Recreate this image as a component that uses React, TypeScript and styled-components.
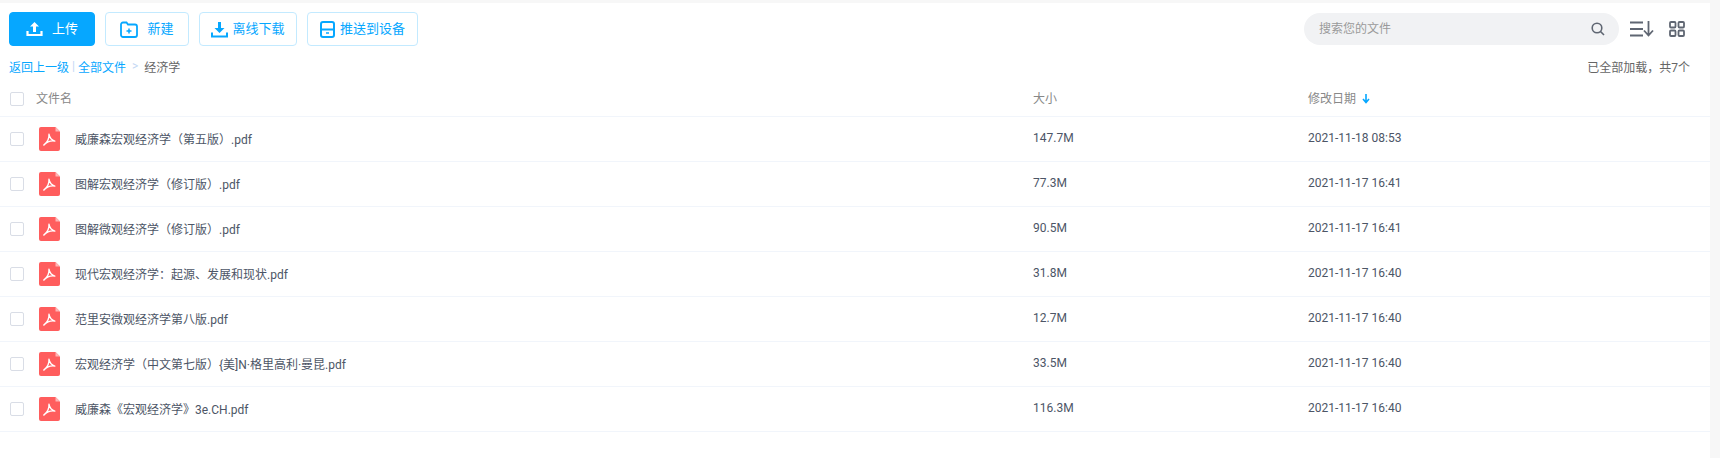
import styled, {createGlobalStyle} from "styled-components";

const GlobalStyle = createGlobalStyle`
	html, body {
		margin: 0;
		padding: 0;
		background: #f7f7f7;
		font-family: Roboto, "Noto Sans CJK SC", "Liberation Sans", sans-serif;
		font-size: 12px;
	}
`;
const Page = styled.div`
	width: 1710px;
	height: 455px;
	margin-top: 3px;
	background: #fff;
	overflow: hidden;
`;
const Toolbar = styled.div`
	display: flex;
	align-items: center;
	justify-content: space-between;
	height: 34px;
	padding: 9px 25px 0 9px;
`;
const Actions = styled.div`
	display: flex;
	gap: 10px;
`;
const Button = styled.button<{$primary?: boolean; $w: number; $gap: number}>`
	display: flex;
	align-items: center;
	justify-content: center;
	gap: ${p => p.$gap}px;
	width: ${p => p.$w}px;
	height: 34px;
	padding: 0;
	border-radius: 4px;
	border: 1px solid ${p => (p.$primary ? "#06a7ff" : "#c3eaff")};
	background: ${p => (p.$primary ? "#06a7ff" : "#fff")};
	color: ${p => (p.$primary ? "#fff" : "#06a7ff")};
	font-family: inherit;
	font-size: 13px;
`;
const Label = styled.span<{$lift: number}>`
	display: block;
	padding-bottom: ${p => p.$lift}px;
`;
const Tools = styled.div`
	display: flex;
	align-items: center;
`;
const Search = styled.div`
	display: flex;
	align-items: center;
	justify-content: space-between;
	width: 315px;
	height: 32px;
	box-sizing: border-box;
	padding: 0 14px 0 15px;
	margin-right: 11px;
	border-radius: 16px;
	background: #f1f2f4;
	color: #9a9a9a;
	font-size: 12px;
`;
const ToolIcon = styled.svg`
	display: block;
	flex: none;
`;
const GridIcon = styled(ToolIcon)`
	margin-left: 15px;
`;
const PathBar = styled.div`
	display: flex;
	align-items: center;
	justify-content: space-between;
	height: 20px;
	margin-top: 11px;
	padding: 0 20px 0 9px;
	color: #666;
`;
const Crumbs = styled.div`
	display: flex;
	align-items: center;
`;
const CrumbLink = styled(Label)`
	color: #06a7ff;
`;
const Sep = styled(Label)<{$m: number}>`
	color: #c4d8f4;
	margin: 0 ${p => p.$m}px;
`;
const Row = styled.div<{$head?: boolean}>`
	display: grid;
	grid-template-columns: 1033px 275px 1fr;
	align-items: center;
	height: ${p => (p.$head ? 40 : 45)}px;
	box-sizing: border-box;
	padding-top: ${p => (p.$head ? 4 : 0)}px;
	border-bottom: 1px solid #f1f5fb;
	color: ${p => (p.$head ? "#888" : "#4c5566")};
`;
const NameCell = styled.div`
	display: flex;
	align-items: center;
`;
const Check = styled.span`
	flex: none;
	box-sizing: border-box;
	width: 14px;
	height: 14px;
	margin-left: 10px;
	border: 1px solid #d9dde6;
	border-radius: 2px;
	background: #fff;
`;
const HeadName = styled(Label)`
	margin-left: 12px;
`;
const FileIcon = styled.svg`
	flex: none;
	margin-left: 15px;
	margin-right: 15px;
`;
const SortArrow = styled.svg`
	margin-left: 6px;
	vertical-align: -1px;
`;

const files = [
	{name: "威廉森宏观经济学（第五版）.pdf", size: "147.7M", date: "2021-11-18 08:53"},
	{name: "图解宏观经济学（修订版）.pdf", size: "77.3M", date: "2021-11-17 16:41"},
	{name: "图解微观经济学（修订版）.pdf", size: "90.5M", date: "2021-11-17 16:41"},
	{name: "现代宏观经济学：起源、发展和现状.pdf", size: "31.8M", date: "2021-11-17 16:40"},
	{name: "范里安微观经济学第八版.pdf", size: "12.7M", date: "2021-11-17 16:40"},
	{name: "宏观经济学（中文第七版）{美]N·格里高利·曼昆.pdf", size: "33.5M", date: "2021-11-17 16:40"},
	{name: "威廉森《宏观经济学》3e.CH.pdf", size: "116.3M", date: "2021-11-17 16:40"},
];

function PdfIcon(){
	return (
		<FileIcon width="21" height="24" viewBox="0 0 21 24">
			<path d="M2 0h14.5L21 4.5V22a2 2 0 0 1-2 2H2a2 2 0 0 1-2-2V2a2 2 0 0 1 2-2z" fill="#ff5d5d"/>
			<path d="M16.5 0L21 4.5h-4.5z" fill="#ffb5b5"/>
			<path d="M10 7.300c.6 3 2.500 5.700 5.800 6.800M10 7.300c.3 4-1.600 8-5.200 10.800M4.800 18.100c3-3 7-4.700 11-4" fill="none" stroke="#fff" strokeWidth="1.400" strokeLinecap="round"/>
		</FileIcon>
	);
}

function App(){
	return (
		<Page>
			<GlobalStyle/>
			<Toolbar>
				<Actions>
					<Button $primary $w={86} $gap={9}>
						<svg width="17" height="16" viewBox="0 0 17 16"><path d="M8.500 1l4.500 4.500h-3V11H7V5.500H4z" fill="#fff"/><path d="M1.500 10v4h14v-4" fill="none" stroke="#fff" strokeWidth="2.200"/></svg>
						<Label $lift={4}>上传</Label>
					</Button>
					<Button $w={84} $gap={9}>
						<svg width="18" height="17" viewBox="0 0 18 17"><path d="M1 3.500A2 2 0 0 1 3 1.500h3.500l1.500 2h7a2 2 0 0 1 2 2V14a2 2 0 0 1-2 2H3a2 2 0 0 1-2-2z" fill="none" stroke="#06a7ff" strokeWidth="1.800"/><path d="M9 7.500v5M6.500 10h5" stroke="#06a7ff" strokeWidth="1.500"/></svg>
						<Label $lift={4}>新建</Label>
					</Button>
					<Button $w={98} $gap={4}>
						<svg width="17" height="17" viewBox="0 0 17 17"><path d="M7 1h3v6h3.500l-5 5-5-5H7z" fill="#06a7ff"/><path d="M1 11.500V15.500h15v-4" fill="none" stroke="#06a7ff" strokeWidth="2"/></svg>
						<Label $lift={4}>离线下载</Label>
					</Button>
					<Button $w={111} $gap={5}>
						<svg width="15" height="17" viewBox="0 0 15 17"><rect x="1" y="1" width="13" height="15" rx="2" fill="none" stroke="#06a7ff" strokeWidth="2"/><path d="M1 8.500h13" stroke="#06a7ff" strokeWidth="2"/><path d="M6 12h3" stroke="#06a7ff" strokeWidth="1.500"/></svg>
						<Label $lift={4}>推送到设备</Label>
					</Button>
				</Actions>
				<Tools>
					<Search>
						<Label $lift={4}>搜索您的文件</Label>
						<ToolIcon width="14" height="14" viewBox="0 0 14 14"><circle cx="6" cy="6" r="4.800" fill="none" stroke="#5f6672" strokeWidth="1.600"/><path d="M9.500 9.500l3.500 3.500" stroke="#5f6672" strokeWidth="1.600"/></ToolIcon>
					</Search>
					<ToolIcon width="24" height="16" viewBox="0 0 24 16"><path d="M0 1.500h13M0 8h13M0 14.500h13M18.500 0v14M14 9.500l4.500 5 4.500-5" fill="none" stroke="#5f6672" strokeWidth="1.800"/></ToolIcon>
					<GridIcon width="16" height="16" viewBox="0 0 16 16" fill="none" stroke="#5f6672" strokeWidth="1.800"><rect x="1" y="1" width="5.500" height="5.500" rx="1"/><rect x="9.500" y="1" width="5.500" height="5.500" rx="1"/><rect x="1" y="9.500" width="5.500" height="5.500" rx="1"/><rect x="9.500" y="9.500" width="5.500" height="5.500" rx="1"/></GridIcon>
				</Tools>
			</Toolbar>
			<PathBar>
				<Crumbs>
					<CrumbLink $lift={2}>返回上一级</CrumbLink>
					<Sep $lift={2} $m={3}>|</Sep>
					<CrumbLink $lift={2}>全部文件</CrumbLink>
					<Sep $lift={2} $m={6}>&gt;</Sep>
					<Label $lift={2}>经济学</Label>
				</Crumbs>
				<Label $lift={2}>已全部加载，共7个</Label>
			</PathBar>
			<Row $head>
				<NameCell><Check/><HeadName $lift={2}>文件名</HeadName></NameCell>
				<Label $lift={2}>大小</Label>
				<Label $lift={2}>修改日期<SortArrow width="8" height="10" viewBox="0 0 8 10"><path d="M4 0v8M1 5l3 3.500L7 5" fill="none" stroke="#06a7ff" strokeWidth="1.600"/></SortArrow></Label>
			</Row>
			{files.map(file => (
				<Row key={file.name}>
					<NameCell><Check/><PdfIcon/><Label $lift={2}>{file.name}</Label></NameCell>
					<Label $lift={2}>{file.size}</Label>
					<Label $lift={2}>{file.date}</Label>
				</Row>
			))}
		</Page>
	);
}
export default App;
